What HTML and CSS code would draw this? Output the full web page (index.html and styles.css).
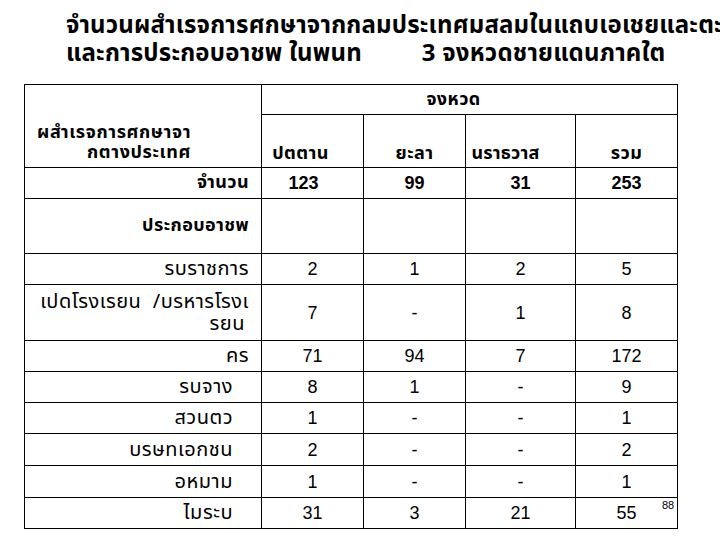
FILE: index.html
```html
<!DOCTYPE html>
<html lang="th">
<head>
<meta charset="utf-8">
<link rel="stylesheet" href="styles.css">
</head>
<body>
<div class="slide">
  <h1 class="title">
    <span class="line">จำนวนผสำเรจการศกษาจากกลมประเทศมสลมในแถบเอเชยและตะวนออกกลาง</span>
    <span class="line">และการประกอบอาชพ ในพนท<span class="gap"></span>3 จงหวดชายแดนภาคใต</span>
  </h1>
  <div class="table-wrap">
    <table class="data">
      <colgroup>
        <col class="c1"><col class="c2"><col class="c3"><col class="c4"><col class="c5">
      </colgroup>
      <tr class="r-h1">
        <th rowspan="2" class="corner"><span class="cl1">ผสำเรจการศกษาจา</span><span class="cl2">กตางประเทศ</span></th>
        <th colspan="4" class="prov">จงหวด</th>
      </tr>
      <tr class="r-h2">
        <th class="ph p1">ปตตาน</th>
        <th class="ph">ยะลา</th>
        <th class="ph p3">นราธวาส</th>
        <th class="ph">รวม</th>
      </tr>
      <tr class="r-31 total">
        <th class="lab">จำนวน</th>
        <td class="t1">123</td><td>99</td><td>31</td><td>253</td>
      </tr>
      <tr class="r-55">
        <th class="lab">ประกอบอาชพ</th>
        <td></td><td></td><td></td><td></td>
      </tr>
      <tr class="r-31">
        <td class="lab n">รบราชการ</td>
        <td>2</td><td>1</td><td>2</td><td>5</td>
      </tr>
      <tr class="r-56">
        <td class="lab n wrap">เปดโรงเรยน&nbsp;&nbsp;/บรหารโรงเ<br><span class="tail">รยน</span></td>
        <td>7</td><td>-</td><td>1</td><td>8</td>
      </tr>
      <tr class="r-31">
        <td class="lab n">คร</td>
        <td>71</td><td>94</td><td>7</td><td>172</td>
      </tr>
      <tr class="r-31">
        <td class="lab n in">รบจาง</td>
        <td>8</td><td>1</td><td>-</td><td>9</td>
      </tr>
      <tr class="r-31">
        <td class="lab n in">สวนตว</td>
        <td>1</td><td>-</td><td>-</td><td>1</td>
      </tr>
      <tr class="r-32">
        <td class="lab n in">บรษทเอกชน</td>
        <td>2</td><td>-</td><td>-</td><td>2</td>
      </tr>
      <tr class="r-32">
        <td class="lab n in">อหมาม</td>
        <td>1</td><td>-</td><td>-</td><td>1</td>
      </tr>
      <tr class="r-31">
        <td class="lab n in">ไมระบ</td>
        <td>31</td><td>3</td><td>21</td><td>55</td>
      </tr>
    </table>
    <span class="pageno">88</span>
  </div>
</div>
</body>
</html>
```
FILE: styles.css
```css
html, body {
  margin: 0;
  padding: 0;
  background: #ffffff;
}
body {
  width: 720px;
  height: 540px;
  overflow: hidden;
  color: #000000;
  font-family: "Noto Sans Thai", "Loma", "Garuda", "Noto Sans", "DejaVu Sans", sans-serif;
}
.slide {
  width: 720px;
  height: 540px;
  overflow: hidden;
}
.title {
  margin: 0;
  padding: 12px 0 0 66px;
  font-size: 24px;
  font-weight: bold;
  line-height: 28px;
  letter-spacing: 0.2px;
  white-space: nowrap;
}
.title .line {
  display: block;
}
.title .gap {
  display: inline-block;
  width: 60px;
}
.table-wrap {
  position: relative;
  margin: 16px 0 0 24px;
  width: 655px;
}
.data {
  border-collapse: collapse;
  table-layout: fixed;
  width: 654px;
  font-size: 18px;
}
.c1 { width: 237px; }
.c2 { width: 102px; }
.c3 { width: 102px; }
.c4 { width: 110px; }
.c5 { width: 102px; }
.data th, .data td {
  border: 1px solid #000000;
  padding: 0;
  text-align: center;
  vertical-align: middle;
  line-height: 20px;
  white-space: nowrap;
}
.data th {
  font-weight: bold;
  letter-spacing: 0.4px;
}
.data td {
  font-family: "Liberation Sans", Arial, sans-serif;
  font-size: 18px;
  font-weight: normal;
}
.data .total td {
  font-weight: bold;
}
.data .total .t1 {
  padding-right: 18px;
}
.r-h1 { height: 30px; }
.r-h2 { height: 53px; }
.r-31 { height: 31px; }
.r-32 { height: 32px; }
.r-55 { height: 55px; }
.r-56 { height: 56px; }
.data .corner {
  text-align: left;
  vertical-align: top;
  padding-top: 38px;
  padding-left: 12px;
  letter-spacing: 0.6px;
}
.corner .cl1, .corner .cl2 {
  display: block;
}
.corner .cl2 {
  padding-left: 50px;
}
.data .prov {
  padding-right: 32px;
}
.data .ph {
  vertical-align: bottom;
  padding-bottom: 3px;
}
.data .p1 { padding-right: 24px; }
.data .p3 { padding-right: 30px; letter-spacing: 0.2px; }
.data .lab {
  text-align: right;
  padding-right: 12px;
}
.data td.n {
  font-family: "Noto Sans Thai", "Loma", "Garuda", "Noto Sans", sans-serif;
  font-size: 20px;
  letter-spacing: 0.5px;
  line-height: 22px;
}
.data td.in {
  padding-right: 28px;
}
.wrap .tail {
  padding-right: 4px;
}
.pageno {
  position: absolute;
  left: 638px;
  top: 416px;
  font-family: "Liberation Sans", Arial, sans-serif;
  font-size: 11px;
  line-height: 11px;
}
```
